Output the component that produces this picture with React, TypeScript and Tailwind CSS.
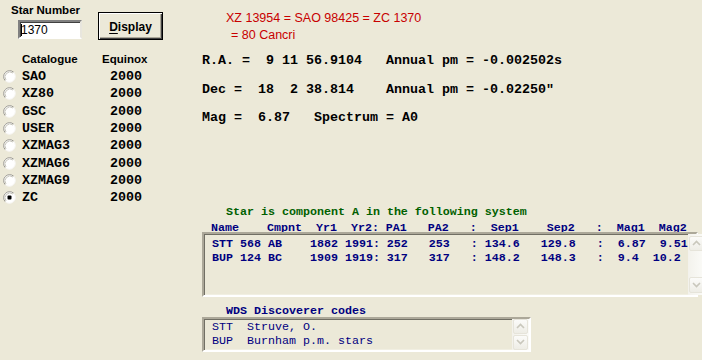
import React from "react";

const MONO = "font-['Liberation_Mono','Courier_New',monospace]";
const SANS = "font-['Liberation_Sans',Arial,sans-serif]";

function Radio({ checked }: { checked?: boolean }) {
  return (
    <svg width="13" height="13" viewBox="0 0 13 13" className="shrink-0">
      <circle cx="6.5" cy="6.5" r="6" fill="#ffffff" />
      <path d="M2.26 10.74 A6 6 0 0 1 10.74 2.26" fill="none" stroke="#9a9890" strokeWidth="1" />
      <path d="M3 10 A5 5 0 0 1 10 3" fill="none" stroke="#c8c6bc" strokeWidth="1" />
      <path d="M10.74 2.26 A6 6 0 0 1 2.26 10.74" fill="none" stroke="#f4f3ee" strokeWidth="1" />
      {checked && <rect x="4.5" y="4.5" width="4" height="4" rx="1" fill="#000000" />}
    </svg>
  );
}

function Chevron({ up }: { up?: boolean }) {
  return (
    <svg width="9" height="6" viewBox="0 0 9 6">
      <path
        d={up ? "M1 5 L4.5 1.5 L8 5" : "M1 1 L4.5 4.5 L8 1"}
        fill="none"
        stroke="#c9c7bc"
        strokeWidth="1.6"
      />
    </svg>
  );
}

function ScrollBtn({ up, h }: { up?: boolean; h: string }) {
  return (
    <div
      className={`${h} w-[15px] flex items-center justify-center rounded-[2px] border border-[#e6e4da] bg-gradient-to-b from-[#fbfbf9] to-[#eeede6]`}
    >
      <Chevron up={up} />
    </div>
  );
}

const catalogues = ["SAO", "XZ80", "GSC", "USER", "XZMAG3", "XZMAG6", "XZMAG9", "ZC"];

const sunken =
  "border-2 border-t-[#aca899] border-l-[#aca899] border-b-[#ffffff] border-r-[#ffffff] shadow-[inset_1px_1px_0_#716f64,inset_-1px_-1px_0_#f1efe2]";

export default function App() {
  return (
    <div className="w-[702px] h-[360px] bg-[#ECE9D8] flex overflow-hidden text-black">
      {/* Left panel */}
      <div className="w-[202px] shrink-0 flex flex-col">
        <div className="flex">
          <div className="w-[98px] pl-[11px] pt-[3px] flex flex-col">
            <div className={`${SANS} font-bold text-[11.5px] leading-[14px] h-[14px]`}>Star Number</div>
            <div
              className={`mt-[3px] ml-[7px] w-[64px] h-[19px] bg-white border-2 border-t-[#808080] border-l-[#808080] border-b-white border-r-[#e8e6de] shadow-[inset_1px_1px_0_#404040] flex items-center pl-[1px]`}
            >
              <div className="w-[1px] h-[12px] bg-black" />
              <span className={`${SANS} text-[12px] leading-[14px] -ml-[1px]`}>1370</span>
            </div>
          </div>
          <div className="mt-[12px] w-[65px] h-[28px] border border-black shadow-[inset_1px_1px_0_#ffffff,inset_-1px_-1px_0_#404040,inset_-2px_-2px_0_#aca899] flex items-center justify-center">
            <span className={`${SANS} font-bold text-[12px] leading-[14px] mt-[1px]`}>
              <span className="underline underline-offset-[2px]">D</span>isplay
            </span>
          </div>
        </div>
        <div className={`mt-[12px] flex ${SANS} font-bold text-[11.5px] leading-[14px] h-[14px]`}>
          <div className="w-[102px] pl-[22px]">Catalogue</div>
          <div>Equinox</div>
        </div>
        <div className="mt-[2px] flex flex-col">
          {catalogues.map((c) => (
            <div key={c} className="h-[17.3px] flex items-center">
              <div className="ml-[3px] w-[19px] flex">
                <Radio checked={c === "ZC"} />
              </div>
              <div className={`${MONO} font-bold text-[13.33px] leading-[17px] w-[88px] whitespace-pre`}>{c}</div>
              <div className={`${MONO} font-bold text-[13.33px] leading-[17px]`}>2000</div>
            </div>
          ))}
        </div>
      </div>

      {/* Right panel */}
      <div className="flex-1 flex flex-col">
        <div className={`mt-[10px] ${SANS} text-[12.5px] leading-[17px] text-[#c80000]`}>
          <div className="pl-[24px]">XZ 13954 = SAO 98425 = ZC 1370</div>
          <div className="pl-[29px]">= 80 Cancri</div>
        </div>
        <div className={`mt-[3px] ${MONO} font-bold text-[13.33px] leading-[28.5px] whitespace-pre`}>
          <div>R.A. =  9 11 56.9104   Annual pm = -0.002502s</div>
          <div>Dec =  18  2 38.814    Annual pm = -0.02250"</div>
          <div>Mag =  6.87   Spectrum = A0</div>
        </div>
        <div className={`mt-[72px] h-[19px] ${MONO} font-bold text-[11.67px] leading-[14px] text-[#006000] pl-[24px] whitespace-pre`}>
          Star is component A in the following system
        </div>
        <div className={`h-[8px] ${MONO} font-bold text-[11.67px] leading-[8px] text-[#000080] pl-[9px] whitespace-pre`}>
          {"Name    Cmpnt  Yr1  Yr2: PA1   PA2   :  Sep1    Sep2   :  Mag1  Mag2"}
        </div>
        <div className={`w-[496px] h-[65px] ${sunken} flex`}>
          <div className={`flex-1 pl-[8px] pt-[3px] ${MONO} font-bold text-[11.67px] leading-[14.3px] text-[#000080] whitespace-pre`}>
            <div>{"STT 568 AB    1882 1991: 252   253   : 134.6   129.8   :  6.87  9.51"}</div>
            <div>{"BUP 124 BC    1909 1919: 317   317   : 148.2   148.3   :  9.4  10.2"}</div>
          </div>
          <div className="w-[17px] flex flex-col justify-between py-[2px] pl-[1px] bg-gradient-to-r from-[#f3f2ec] to-[#fbfbf8]">
            <ScrollBtn up h="h-[15px]" />
            <ScrollBtn h="h-[16px]" />
          </div>
        </div>
        <div className={`mt-[8px] h-[12px] ${MONO} font-bold text-[11.67px] leading-[12px] text-[#000080] pl-[24px] whitespace-pre`}>
          WDS Discoverer codes
        </div>
        <div className={`w-[329px] h-[35px] ${sunken} flex`}>
          <div className={`flex-1 pl-[8px] pt-[1px] ${MONO} text-[11.67px] leading-[14.3px] text-[#000080] whitespace-pre`}>
            <div>{"STT  Struve, O."}</div>
            <div>{"BUP  Burnham p.m. stars"}</div>
          </div>
          <div className="w-[17px] flex flex-col justify-between py-[0px] pl-[1px] bg-gradient-to-r from-[#f3f2ec] to-[#fbfbf8]">
            <ScrollBtn up h="h-[15px]" />
            <ScrollBtn h="h-[15px]" />
          </div>
        </div>
      </div>
    </div>
  );
}
